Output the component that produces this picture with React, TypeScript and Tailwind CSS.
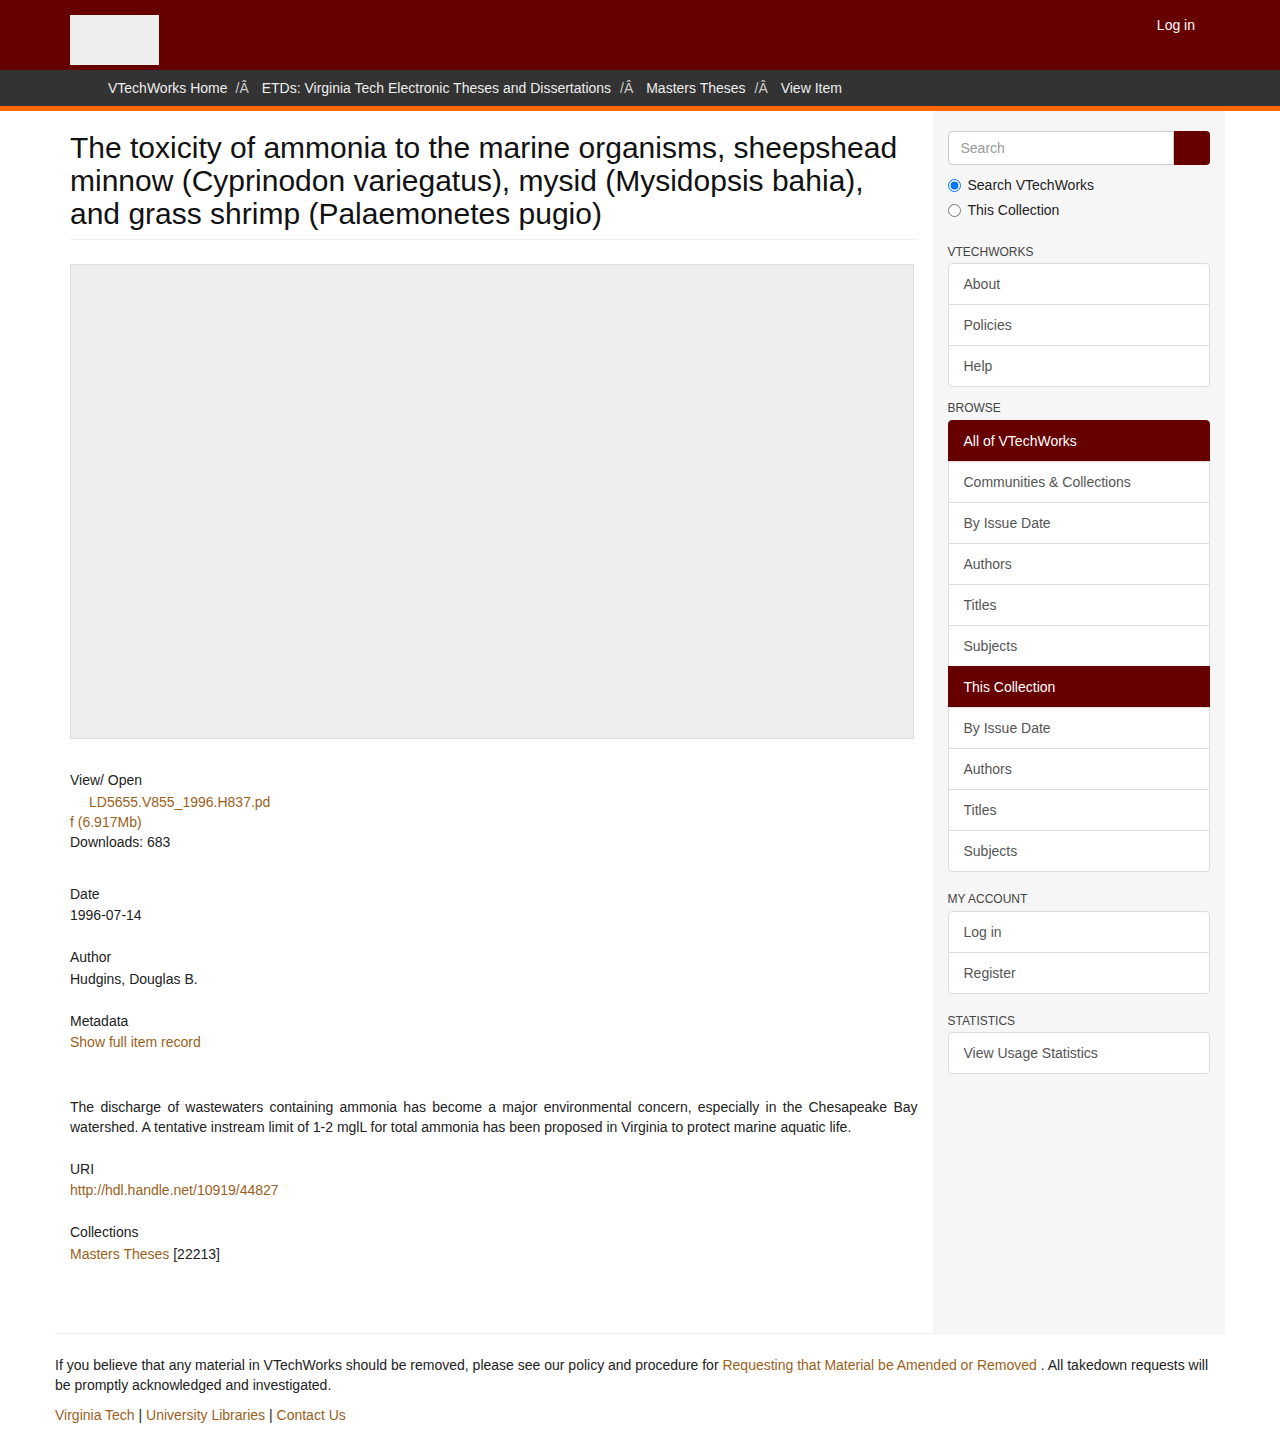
import React from "react";

const LINK = "text-[#9b5f1d]";

function SideHeading({ children, className }: { children: React.ReactNode; className: string }) {
  return (
    <div className={`text-[12px] leading-[17px] uppercase text-[#444] ${className}`}>{children}</div>
  );
}

function ListGroup({ items }: { items: { label: string; active?: boolean }[] }) {
  return (
    <div className="flex flex-col">
      {items.map((it, i) => {
        const first = i === 0;
        const last = i === items.length - 1;
        const base = "px-[15px] py-[10px] leading-[20px] border text-[14px]";
        const color = it.active
          ? "bg-[#660000] border-[#660000] text-white"
          : "bg-white border-[#dddddd] text-[#555555]";
        const pos = `${first ? "rounded-t-[4px]" : "-mt-px"} ${last ? "rounded-b-[4px]" : ""}`;
        return (
          <div key={i} className={`${base} ${color} ${pos}`}>
            {it.label}
          </div>
        );
      })}
    </div>
  );
}

function Sep({ className }: { className: string }) {
  return <span className={`text-[#cccccc] ${className}`}>/Â{"\u00a0"}</span>;
}

export default function App() {
  return (
    <div className="min-h-[1455px] bg-white font-['Liberation_Sans',Arial,sans-serif] text-[14px] leading-[20px] text-[#222222]">
      {/* Header */}
      <header className="h-[70px] bg-[#660000]">
        <div className="mx-auto w-[1170px] px-[15px] flex justify-between">
          <div className="mt-[15px] h-[50px] w-[89px] bg-[#eeeeee]" />
          <a className="mt-[15px] mr-[15px] text-white leading-[20px]">Log in</a>
        </div>
      </header>

      {/* Breadcrumb */}
      <div className="h-[41px] bg-[#333333] border-b-[5px] border-[#ff6600]">
        <div className="mx-auto w-[1170px] pl-[53px] pt-[8px] text-[#eeeeee] leading-[20px] whitespace-nowrap">
          <a>VTechWorks Home</a>
          <Sep className="ml-[8px] mr-[9px]" />
          <a>ETDs: Virginia Tech Electronic Theses and Dissertations</a>
          <Sep className="ml-[9px] mr-[9px]" />
          <a>Masters Theses</a>
          <Sep className="ml-[9px] mr-[9px]" />
          <span>View Item</span>
        </div>
      </div>

      {/* Main */}
      <div className="mx-auto w-[1170px] flex">
        <main className="w-[877.5px] px-[15px] pb-[69px]">
          <h2 className="mt-[20px] text-[30px] leading-[33px] pb-[9px] border-b border-[#eeeeee] font-normal text-[#111111]">
            The toxicity of ammonia to the marine organisms, sheepshead minnow (Cyprinodon variegatus), mysid (Mysidopsis bahia), and grass shrimp (Palaemonetes pugio)
          </h2>

          <div className="mt-[24px] w-[844px] h-[475px] bg-[#eeeeee] border border-[#dddddd]" />

          <div className="mt-[31px]">View/ Open</div>
          <div className="mt-[2px]">
            <a className={LINK}>
              <span className="inline-block w-[19px]" />
              LD5655.V855_1996.H837.pd
              <br />
              f (6.917Mb)
            </a>
          </div>
          <div>Downloads: 683</div>

          <div className="mt-[32px]">Date</div>
          <div className="mt-[1px]">1996-07-14</div>

          <div className="mt-[22px]">Author</div>
          <div className="mt-[2px]">Hudgins, Douglas B.</div>

          <div className="mt-[22px]">Metadata</div>
          <div className="mt-[1px]">
            <a className={LINK}>Show full item record</a>
          </div>

          <p className="mt-[45px] text-justify">
            The discharge of wastewaters containing ammonia has become a major environmental concern, especially in the Chesapeake Bay watershed. A tentative instream limit of 1-2 mglL for total ammonia has been proposed in Virginia to protect marine aquatic life.
          </p>

          <div className="mt-[22px]">URI</div>
          <div className="mt-[1px]">
            <a className={LINK}>http://hdl.handle.net/10919/44827</a>
          </div>

          <div className="mt-[22px]">Collections</div>
          <div className="mt-[2px]">
            <a className={LINK}>Masters Theses</a> [22213]
          </div>
        </main>

        <aside className="w-[292.5px] bg-[#f6f6f6] px-[15px]">
          <div className="mt-[20px] flex h-[34px]">
            <input
              placeholder="Search"
              className="w-[226px] h-[34px] border border-[#cccccc] rounded-l-[4px] bg-white px-[12px] text-[14px] text-[#555555] placeholder:text-[#999999] outline-none"
            />
            <button className="w-[36px] h-[34px] bg-[#660000] rounded-r-[4px]" />
          </div>
          <label className="mt-[10px] flex items-center h-[20px] text-[#222222]">
            <input type="radio" name="scope" defaultChecked className="m-0 w-[13px] h-[13px]" />
            <span className="ml-[7px]">Search VTechWorks</span>
          </label>
          <label className="mt-[5px] flex items-center h-[20px] text-[#222222]">
            <input type="radio" name="scope" className="m-0 w-[13px] h-[13px]" />
            <span className="ml-[7px]">This Collection</span>
          </label>

          <SideHeading className="mt-[24px] mb-[2px]">VTechWorks</SideHeading>
          <ListGroup items={[{ label: "About" }, { label: "Policies" }, { label: "Help" }]} />

          <SideHeading className="mt-[13px] mb-[3px]">Browse</SideHeading>
          <ListGroup
            items={[
              { label: "All of VTechWorks", active: true },
              { label: "Communities & Collections" },
              { label: "By Issue Date" },
              { label: "Authors" },
              { label: "Titles" },
              { label: "Subjects" },
              { label: "This Collection", active: true },
              { label: "By Issue Date" },
              { label: "Authors" },
              { label: "Titles" },
              { label: "Subjects" },
            ]}
          />

          <SideHeading className="mt-[19px] mb-[3px]">My Account</SideHeading>
          <ListGroup items={[{ label: "Log in" }, { label: "Register" }]} />

          <SideHeading className="mt-[19px] mb-[2px]">Statistics</SideHeading>
          <ListGroup items={[{ label: "View Usage Statistics" }]} />
        </aside>
      </div>

      {/* Footer */}
      <footer className="mx-auto w-[1170px] border-t border-[#eeeeee] pt-[21px] pb-[30px]">
        <p>
          If you believe that any material in VTechWorks should be removed, please see our policy and procedure for{" "}
          <a className={LINK}>Requesting that Material be Amended or Removed</a> . All takedown requests will be promptly acknowledged and investigated.
        </p>
        <p className="mt-[10px]">
          <a className={LINK}>Virginia Tech</a> | <a className={LINK}>University Libraries</a> |{" "}
          <a className={LINK}>Contact Us</a>
        </p>
      </footer>
    </div>
  );
}
